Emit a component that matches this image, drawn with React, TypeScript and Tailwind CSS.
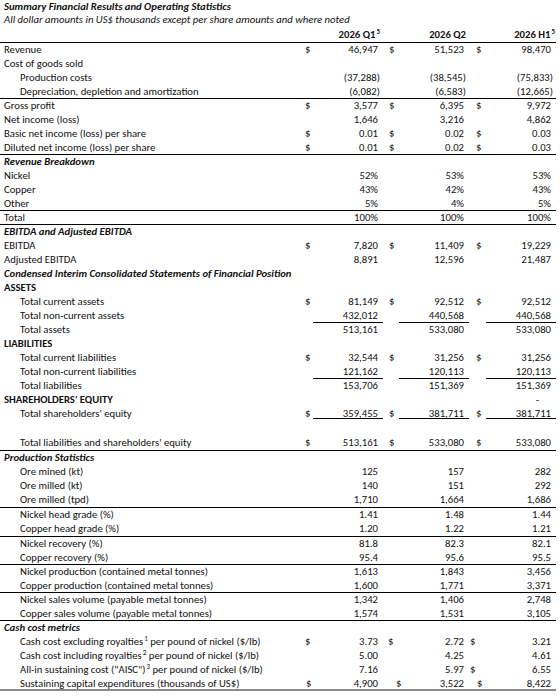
import type { ReactNode } from 'react'

type Row = {
  label?: ReactNode
  kind?: 'indent' | 'b' | 'bi'
  v?: string[]
  d?: string[] // '' = no dollar sign, otherwise the padding class for the $
  line?: boolean
  under?: boolean
  base?: boolean
  tall?: boolean
}

const ALL = ['pl-[2px]', 'pl-[6px]', 'pl-[7px]']
const none = ['', '', '']

const Sup = ({ n }: { n: string }) => (
  <span className="text-[7px] leading-[7px] align-top ml-[1px]">{n}</span>
)

const rows: Row[] = [
  { label: 'Revenue', v: ['46,947', '51,523', '98,470'], d: ALL },
  { label: 'Cost of goods sold' },
  { label: 'Production costs', kind: 'indent', v: ['(37,288)', '(38,545)', '(75,833)'] },
  { label: 'Depreciation, depletion and amortization', kind: 'indent', v: ['(6,082)', '(6,583)', '(12,665)'], line: true },
  { label: 'Gross profit', v: ['3,577', '6,395', '9,972'], d: ALL },
  { label: 'Net income (loss)', v: ['1,646', '3,216', '4,862'] },
  { label: 'Basic net income (loss) per share', v: ['0.01', '0.02', '0.03'], d: ALL },
  { label: 'Diluted net income (loss) per share', v: ['0.01', '0.02', '0.03'], d: ALL, line: true },
  { label: 'Revenue Breakdown', kind: 'bi' },
  { label: 'Nickel', v: ['52%', '53%', '53%'] },
  { label: 'Copper', v: ['43%', '42%', '43%'] },
  { label: 'Other', v: ['5%', '4%', '5%'], line: true },
  { label: 'Total', v: ['100%', '100%', '100%'], line: true },
  { label: 'EBITDA and Adjusted EBITDA', kind: 'bi' },
  { label: 'EBITDA', v: ['7,820', '11,409', '19,229'], d: ALL },
  { label: 'Adjusted EBITDA', v: ['8,891', '12,596', '21,487'] },
  { label: 'Condensed Interim Consolidated Statements of Financial Position', kind: 'bi' },
  { label: 'ASSETS', kind: 'b' },
  { label: 'Total current assets', kind: 'indent', v: ['81,149', '92,512', '92,512'], d: ALL },
  { label: 'Total non-current assets', kind: 'indent', v: ['432,012', '440,568', '440,568'], under: true },
  { label: 'Total assets', kind: 'indent', v: ['513,161', '533,080', '533,080'] },
  { label: 'LIABILITIES', kind: 'b' },
  { label: 'Total current liabilities', kind: 'indent', v: ['32,544', '31,256', '31,256'], d: ALL },
  { label: 'Total non-current liabilities', kind: 'indent', v: ['121,162', '120,113', '120,113'], under: true },
  { label: 'Total liabilities', kind: 'indent', v: ['153,706', '151,369', '151,369'] },
  { label: "SHAREHOLDERS' EQUITY", kind: 'b', v: ['', '', '-'] },
  { label: "Total shareholders' equity", kind: 'indent', v: ['359,455', '381,711', '381,711'], d: ALL, base: true },
  { tall: true },
  { label: "Total liabilities and shareholders' equity", kind: 'indent', v: ['513,161', '533,080', '533,080'], d: ALL, line: true, tall: true },
  { label: 'Production Statistics', kind: 'bi' },
  { label: 'Ore mined (kt)', kind: 'indent', v: ['125', '157', '282'] },
  { label: 'Ore milled (kt)', kind: 'indent', v: ['140', '151', '292'] },
  { label: 'Ore milled (tpd)', kind: 'indent', v: ['1,710', '1,664', '1,686'], line: true, tall: true },
  { label: 'Nickel head grade (%)', kind: 'indent', v: ['1.41', '1.48', '1.44'] },
  { label: 'Copper head grade (%)', kind: 'indent', v: ['1.20', '1.22', '1.21'], line: true, tall: true },
  { label: 'Nickel recovery (%)', kind: 'indent', v: ['81.8', '82.3', '82.1'] },
  { label: 'Copper recovery (%)', kind: 'indent', v: ['95.4', '95.6', '95.5'], line: true },
  { label: 'Nickel production (contained metal tonnes)', kind: 'indent', v: ['1,613', '1,843', '3,456'] },
  { label: 'Copper production (contained metal tonnes)', kind: 'indent', v: ['1,600', '1,771', '3,371'], line: true },
  { label: 'Nickel sales volume (payable metal tonnes)', kind: 'indent', v: ['1,342', '1,406', '2,748'] },
  { label: 'Copper sales volume (payable metal tonnes)', kind: 'indent', v: ['1,574', '1,531', '3,105'], line: true },
  { label: 'Cash cost metrics', kind: 'bi' },
  {
    label: <>Cash cost excluding royalties<Sup n="1" /> per pound of nickel ($/lb)</>,
    kind: 'indent', v: ['3.73', '2.72', '3.21'], d: ['pl-[2px]', 'pl-[5px]', 'pl-[1px]']
  },
  {
    label: <>Cash cost including royalties<Sup n="2" /> per pound of nickel ($/lb)</>,
    kind: 'indent', v: ['5.00', '4.25', '4.61']
  },
  {
    label: <>All-in sustaining cost ("AISC")<Sup n="3" /> per pound of nickel ($/lb)</>,
    kind: 'indent', v: ['7.16', '5.97', '6.55'], d: ['', '', 'pl-[1px]']
  },
  {
    label: 'Sustaining capital expenditures (thousands of US$)',
    kind: 'indent', v: ['4,900', '3,522', '8,422'], d: ['pl-[3px]', 'pl-[13px]', 'pl-[8px]']
  }
]

function TableRow({ row, last }: { row: Row; last: boolean }) {
  const d = row.d ?? none
  const labelCls =
    row.kind === 'indent'
      ? 'pl-[20px]'
      : row.kind === 'b'
      ? 'pl-[4px] font-bold'
      : row.kind === 'bi'
      ? 'pl-[4px] font-bold italic'
      : 'pl-[4px]'
  const border = row.line
    ? 'border-b border-black'
    : last
    ? 'border-b-2 border-[#8a8a8a]'
    : ''
  return (
    <div
      className={`grid grid-cols-[303px_10px_70px_16px_70px_17px_70px] leading-[14px] ${
        row.tall ? 'h-[15px]' : 'h-[14px]'
      } ${border}`}
    >
      <div className={`whitespace-nowrap ${labelCls}`}>{row.label}</div>
      {[0, 1, 2].map(i => {
        const val = row.v?.[i] ?? ''
        const paren = val.startsWith('(')
        const dash = val === '-'
        const cellCls = row.under
          ? 'border-b border-black h-[14px]'
          : row.base
          ? 'border-b border-black h-[12px]'
          : ''
        return [
          <div key={`d${i}`} className={d[i]}>
            {d[i] ? '$' : ''}
          </div>,
          <div
            key={`v${i}`}
            className={`text-right whitespace-nowrap ${cellCls} ${
              dash ? 'pr-[17px]' : paren ? 'pr-[3px]' : 'pr-[5px]'
            }`}
          >
            {val}
          </div>
        ]
      })}
    </div>
  )
}

export default function App() {
  return (
    <div
      className="w-[560px] h-[699px] bg-white text-[#111] text-[10.7px] overflow-hidden"
      style={{ fontFamily: 'Carlito, Lato, "Open Sans", sans-serif' }}
    >
      <div className="w-[556px]">
        {/* Title block */}
        <div className="h-[13px] leading-[13px] pl-[4px] font-bold italic">
          Summary Financial Results and Operating Statistics
        </div>
        <div className="h-[13px] leading-[13px] pl-[4px] italic">
          All dollar amounts in US$ thousands except per share amounts and where noted
        </div>

        {/* Column headers */}
        <div className="grid grid-cols-[303px_10px_70px_16px_70px_17px_70px] h-[17px] items-end border-b border-black font-bold leading-[14px]">
          <div />
          <div />
          <div className="text-right pr-[3px] whitespace-nowrap">
            2026 Q1<Sup n="5" />
          </div>
          <div />
          <div className="text-right pr-[3px]">2026 Q2</div>
          <div />
          <div className="text-right pr-[1px] whitespace-nowrap">
            2026 H1<Sup n="5" />
          </div>
        </div>

        {rows.map((r, i) => (
          <TableRow key={i} row={r} last={i === rows.length - 1} />
        ))}
      </div>
    </div>
  )
}
